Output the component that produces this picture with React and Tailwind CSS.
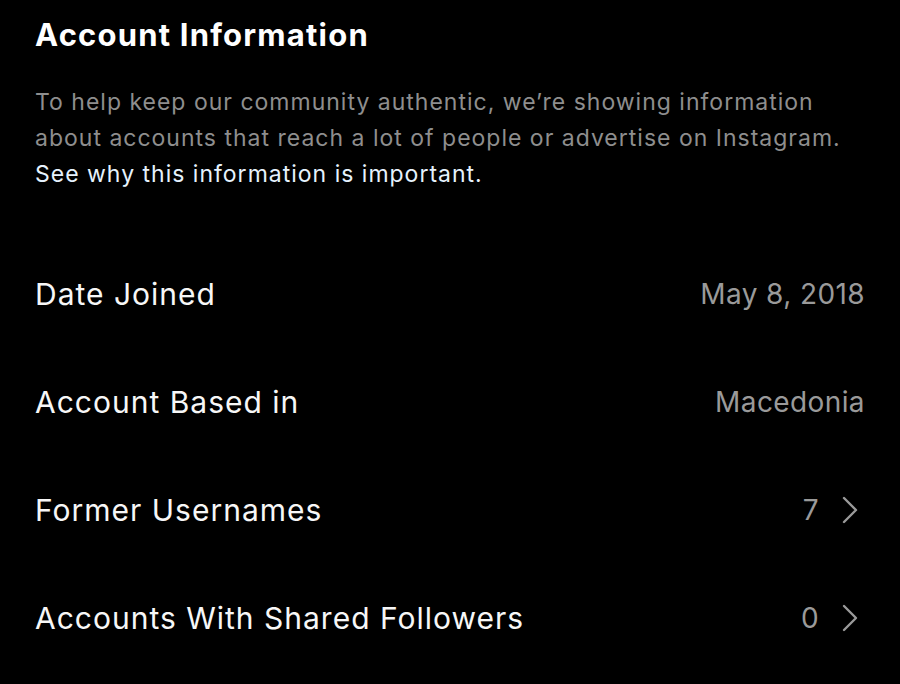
import React from "react";

const rows = [
  { label: "Date Joined", value: "May 8, 2018" },
  { label: "Account Based in", value: "Macedonia" },
  { label: "Former Usernames", value: "7", chevron: true },
  { label: "Accounts With Shared Followers", value: "0", chevron: true },
];

const Chevron = () => (
  <svg width="16" height="28" viewBox="0 0 16 28" className="shrink-0 mr-[7px]">
    <path d="M2 2 L14 14 L2 26" fill="none" stroke="#9a9a9a" strokeWidth="2.4" strokeLinecap="round" strokeLinejoin="round" />
  </svg>
);

export default function App() {
  return (
    <div
      className="w-[900px] h-[684px] overflow-hidden bg-black text-white px-[35px] pt-[17px]"
      style={{ fontFamily: "Inter, 'Noto Sans', sans-serif" }}
    >
      {/* Header */}
      <h1 className="text-[31px] leading-[36px] font-bold tracking-[1.2px] text-white">
        Account Information
      </h1>

      {/* Description */}
      <p className="mt-[31px] text-[23px] leading-[36px] text-[#8e8e8e] tracking-[1px]">
        To help keep our community authentic, we’re showing information
        <br />
        about accounts that reach a lot of people or advertise on Instagram.
        <br />
        <span className="text-[#e6f2fd]">See why this information is important.</span>
      </p>

      {/* Info rows */}
      <div className="mt-[48px]">
        {rows.map((row) => (
          <div key={row.label} className="h-[108px] flex items-center justify-between">
            <span className="text-[30px] tracking-[1px] text-[#f7f7f7]">{row.label}</span>
            <div className="flex items-center gap-[23px]">
              <span className="text-[28px] tracking-[0.4px] text-[#9a9a9a]">{row.value}</span>
              {row.chevron && <Chevron />}
            </div>
          </div>
        ))}
      </div>
    </div>
  );
}
